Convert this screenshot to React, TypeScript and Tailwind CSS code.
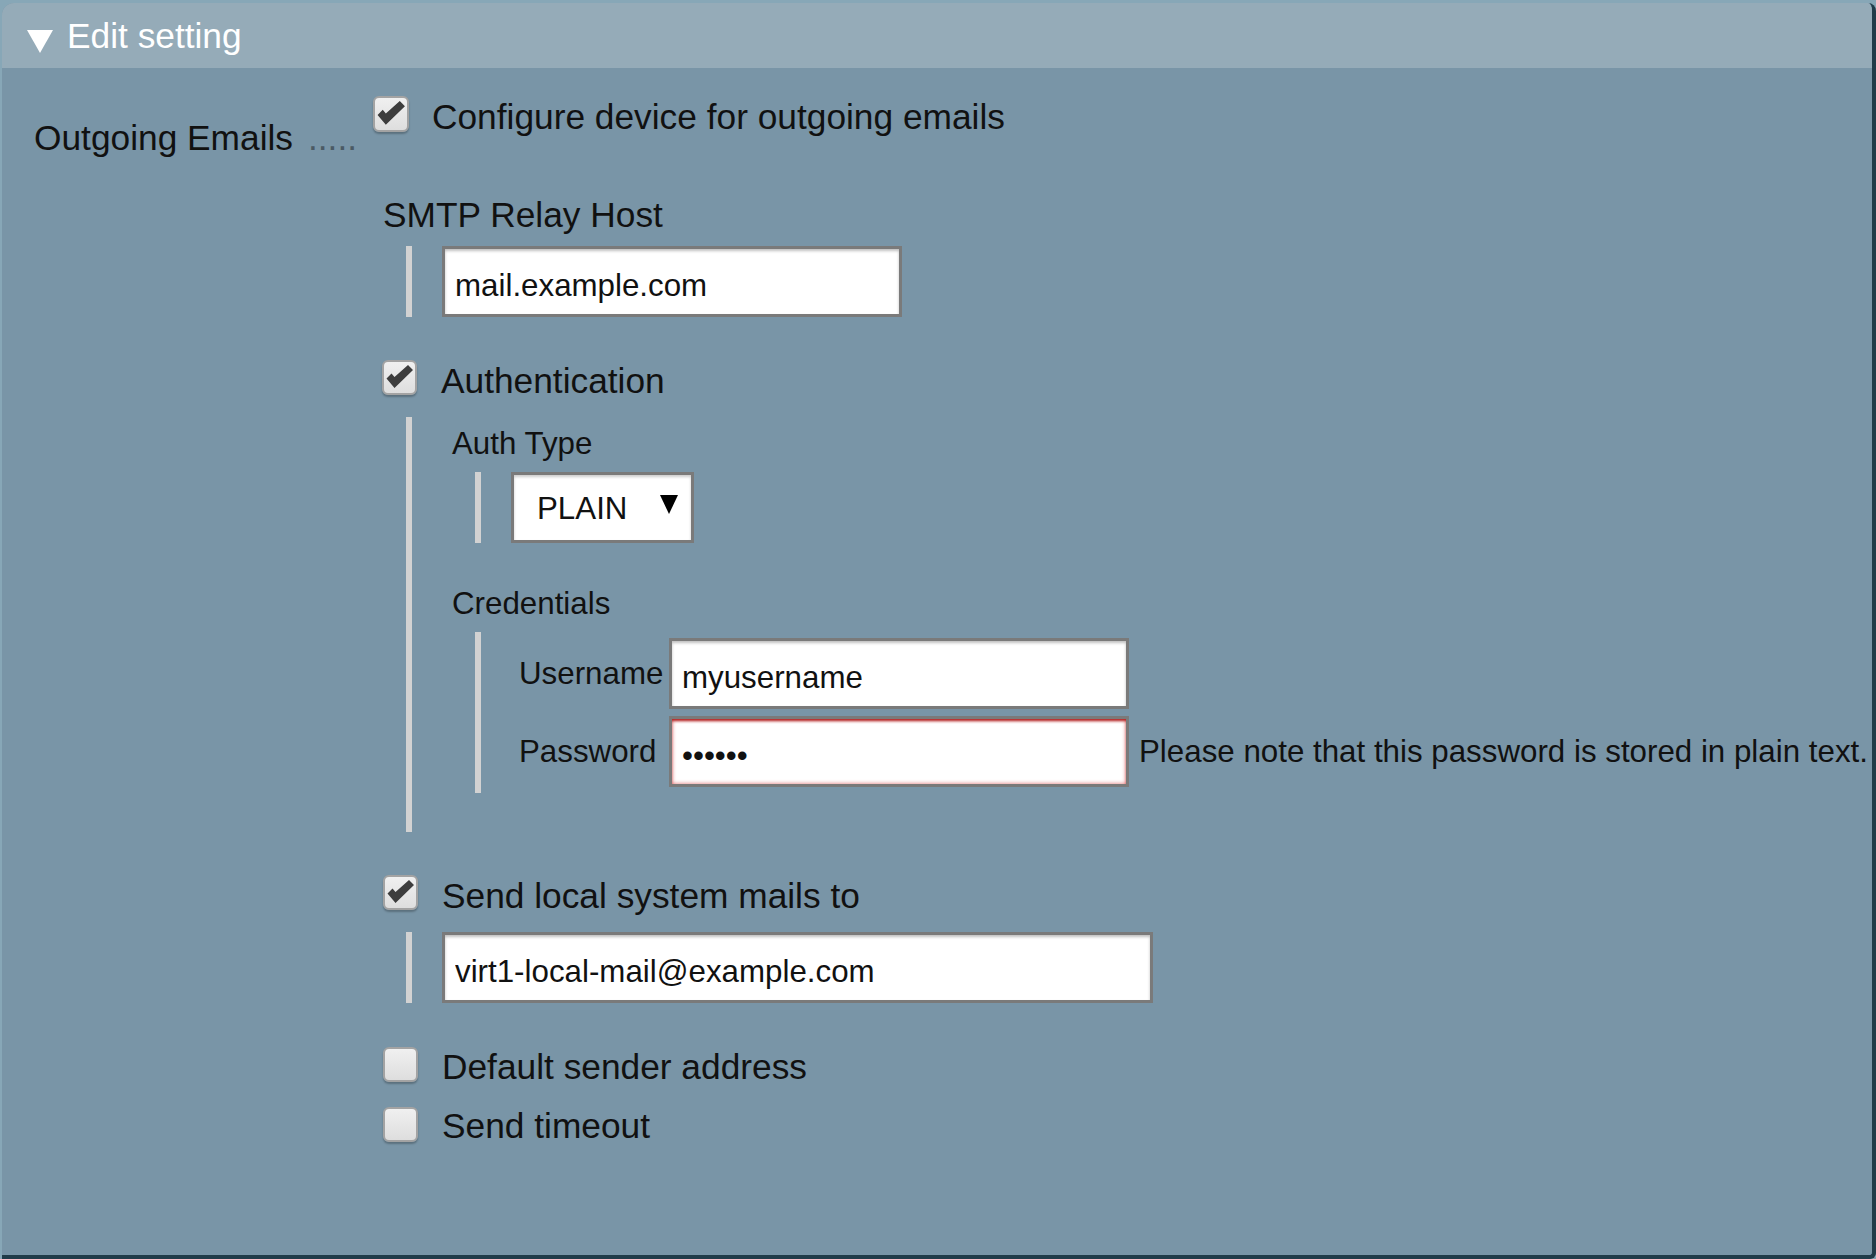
import React from 'react'

const font = "font-['Liberation_Sans',Arial,sans-serif]"

function Check({ checked, className = '' }: { checked?: boolean; className?: string }) {
  return (
    <div
      className={`w-[35px] h-[35px] shrink-0 rounded-[6px] border-2 border-[#a3a3a3] bg-gradient-to-b from-[#f0f0f0] to-[#dedede] shadow-[0_2px_2px_rgba(0,0,0,0.25)] ${className}`}
    >
      {checked && (
        <svg viewBox="0 0 31 31" className="w-full h-full">
          <path d="M2.5 16.5 L7.5 11.5 L10.5 15 L24 3 L29 8 L10.5 26 Z" fill="#3d3d3d" />
        </svg>
      )}
    </div>
  )
}

function Bar() {
  return <div className="w-[6px] self-stretch bg-[#d2d2d2] shrink-0" />
}

const inputCls =
  "h-[71px] border-[3px] border-[#7a7a7a] bg-white px-[10px] pt-[8px] text-[31.3px] text-[#111] outline-none " + font

export default function App() {
  return (
    <div className={`w-[1876px] h-[1259px] bg-[#87a7b7] pt-[3px] pl-[2px] ${font} text-[#111]`}>
      <div className="h-full flex flex-col rounded-tl-[12px] rounded-tr-[8px] rounded-br-[6px] border-r-4 border-b-4 border-[#213c49] bg-[#7995a7] overflow-hidden">
        {/* header */}
        <div className="h-[65px] shrink-0 bg-[#95abb8] flex items-start pl-[25px]">
          <svg viewBox="0 0 26 23" className="w-[26px] h-[23px] mt-[27px]">
            <polygon points="0,0 26,0 13,23" fill="#fff" />
          </svg>
          <span className="ml-[14px] mt-[13px] text-[35.3px] leading-[40px] text-white">Edit setting</span>
        </div>

        {/* body */}
        <div className="flex-1 flex pl-[32px]">
          <div className="w-[339px] shrink-0 pt-[50px] text-[35.3px] leading-[40px] whitespace-nowrap">
            Outgoing Emails<span className="ml-[15px] text-[#4b5a64]">.....</span>
          </div>

          <div className="flex flex-col pt-[28px]">
            <div className="flex items-start">
              <Check checked className="w-[36px] h-[36px]" />
              <span className="ml-[23px] mt-[1px] text-[35.3px] leading-[40px]">Configure device for outgoing emails</span>
            </div>

            <div className="ml-[10px] mt-[58px] text-[35.3px] leading-[40px]">SMTP Relay Host</div>
            <div className="flex mt-[11px] ml-[33px]">
              <Bar />
              <input
                readOnly
                defaultValue="mail.example.com"
                className={`${inputCls} ml-[30px] w-[460px] shadow-[inset_0_2px_3px_rgba(0,0,0,0.25)]`}
              />
            </div>

            <div className="flex items-start mt-[43px] ml-[9px]">
              <Check checked />
              <span className="ml-[24px] mt-[1px] text-[35.3px] leading-[40px]">Authentication</span>
            </div>

            <div className="flex mt-[16px] ml-[33px]">
              <Bar />
              <div className="flex flex-col ml-[40px] pt-[9px] pb-[39px]">
                <div className="text-[31.3px] leading-[35px]">Auth Type</div>
                <div className="flex mt-[11px] ml-[23px]">
                  <Bar />
                  <div className="ml-[30px] w-[183px] h-[71px] border-[3px] border-[#7a7a7a] bg-white flex items-center pl-[23px] pr-[13px] shadow-[inset_0_2px_3px_rgba(0,0,0,0.2)]">
                    <span className="text-[31.3px] leading-[35px] mt-[2px]">PLAIN</span>
                    <svg viewBox="0 0 18 19" className="w-[18px] h-[19px] ml-auto mb-[6px]">
                      <polygon points="0,0 18,0 9,19" fill="#000" />
                    </svg>
                  </div>
                </div>

                <div className="mt-[43px] text-[31.3px] leading-[35px]">Credentials</div>
                <div className="flex mt-[11px] ml-[23px]">
                  <Bar />
                  <div className="ml-[38px] py-[6px] grid grid-cols-[150px_auto_auto] gap-y-[7px] items-center">
                    <span className="text-[31.3px] leading-[35px]">Username</span>
                    <input
                      readOnly
                      defaultValue="myusername"
                      className={`${inputCls} w-[460px] shadow-[inset_0_2px_3px_rgba(0,0,0,0.25)]`}
                    />
                    <span />
                    <span className="text-[31.3px] leading-[35px]">Password</span>
                    <input
                      readOnly
                      type="password"
                      defaultValue="secret"
                      className={`${inputCls} w-[460px] shadow-[inset_0_3px_3px_-1px_#b02020,inset_0_0_4px_#e06a6a]`}
                    />
                    <span className="ml-[10px] text-[31.3px] leading-[35px] whitespace-nowrap">
                      Please note that this password is stored in plain text.
                    </span>
                  </div>
                </div>
              </div>
            </div>

            <div className="flex items-start mt-[43px] ml-[10px]">
              <Check checked />
              <span className="ml-[24px] mt-[1px] text-[35.3px] leading-[40px]">Send local system mails to</span>
            </div>
            <div className="flex mt-[16px] ml-[33px]">
              <Bar />
              <input
                readOnly
                defaultValue="virt1-local-mail@example.com"
                className={`${inputCls} ml-[30px] w-[711px] shadow-[inset_0_2px_3px_rgba(0,0,0,0.25)]`}
              />
            </div>

            <div className="flex items-start mt-[44px] ml-[10px]">
              <Check />
              <span className="ml-[24px] text-[35.3px] leading-[40px]">Default sender address</span>
            </div>
            <div className="flex items-start mt-[20px] ml-[10px]">
              <Check />
              <span className="ml-[24px] -mt-[1px] text-[35.3px] leading-[40px]">Send timeout</span>
            </div>
          </div>
        </div>
      </div>
    </div>
  )
}
